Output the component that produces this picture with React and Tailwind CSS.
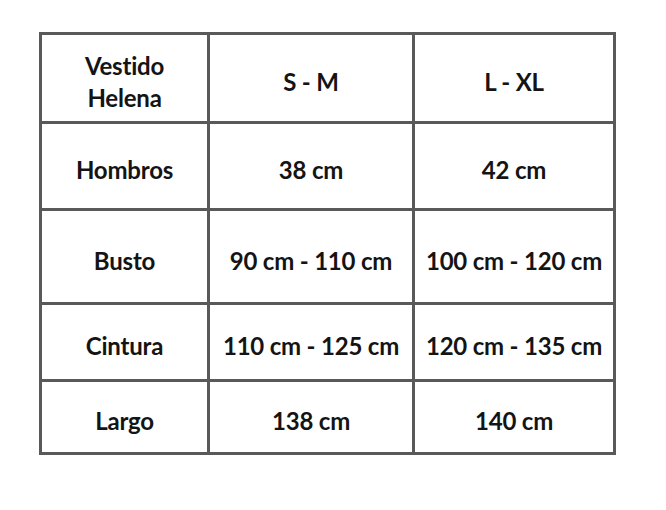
import React from 'react';

const rows = [
  { label: 'Hombros', sm: '38 cm', lxl: '42 cm', h: 'h-[87px]' },
  { label: 'Busto', sm: '90 cm - 110 cm', lxl: '100 cm - 120 cm', h: 'h-[94px]' },
  { label: 'Cintura', sm: '110 cm - 125 cm', lxl: '120 cm - 135 cm', h: 'h-[77px]' },
  { label: 'Largo', sm: '138 cm', lxl: '140 cm', h: 'h-[73px]' },
];

const cell = 'border-[3px] border-[#595959] text-center align-middle pt-[8px] leading-[32px] whitespace-nowrap';

export default function App() {
  return (
    <div className="w-[666px] h-[510px] bg-white pt-[32px] pl-[39px] font-['Lato',sans-serif] font-bold text-[24px] tracking-[-0.2px] text-[#141414]">
      <table className="border-collapse table-fixed w-[574px]">
        <colgroup>
          <col className="w-[168px]" />
          <col className="w-[205px]" />
          <col className="w-[201px]" />
        </colgroup>
        <tbody>
          <tr className="h-[89px]">
            <td className={cell}>
              Vestido
              <br />
              Helena
            </td>
            <td className={cell}>S - M</td>
            <td className={cell}>L - XL</td>
          </tr>
          {rows.map((r) => (
            <tr key={r.label} className={r.h}>
              <td className={cell}>{r.label}</td>
              <td className={cell}>{r.sm}</td>
              <td className={cell}>{r.lxl}</td>
            </tr>
          ))}
        </tbody>
      </table>
    </div>
  );
}
